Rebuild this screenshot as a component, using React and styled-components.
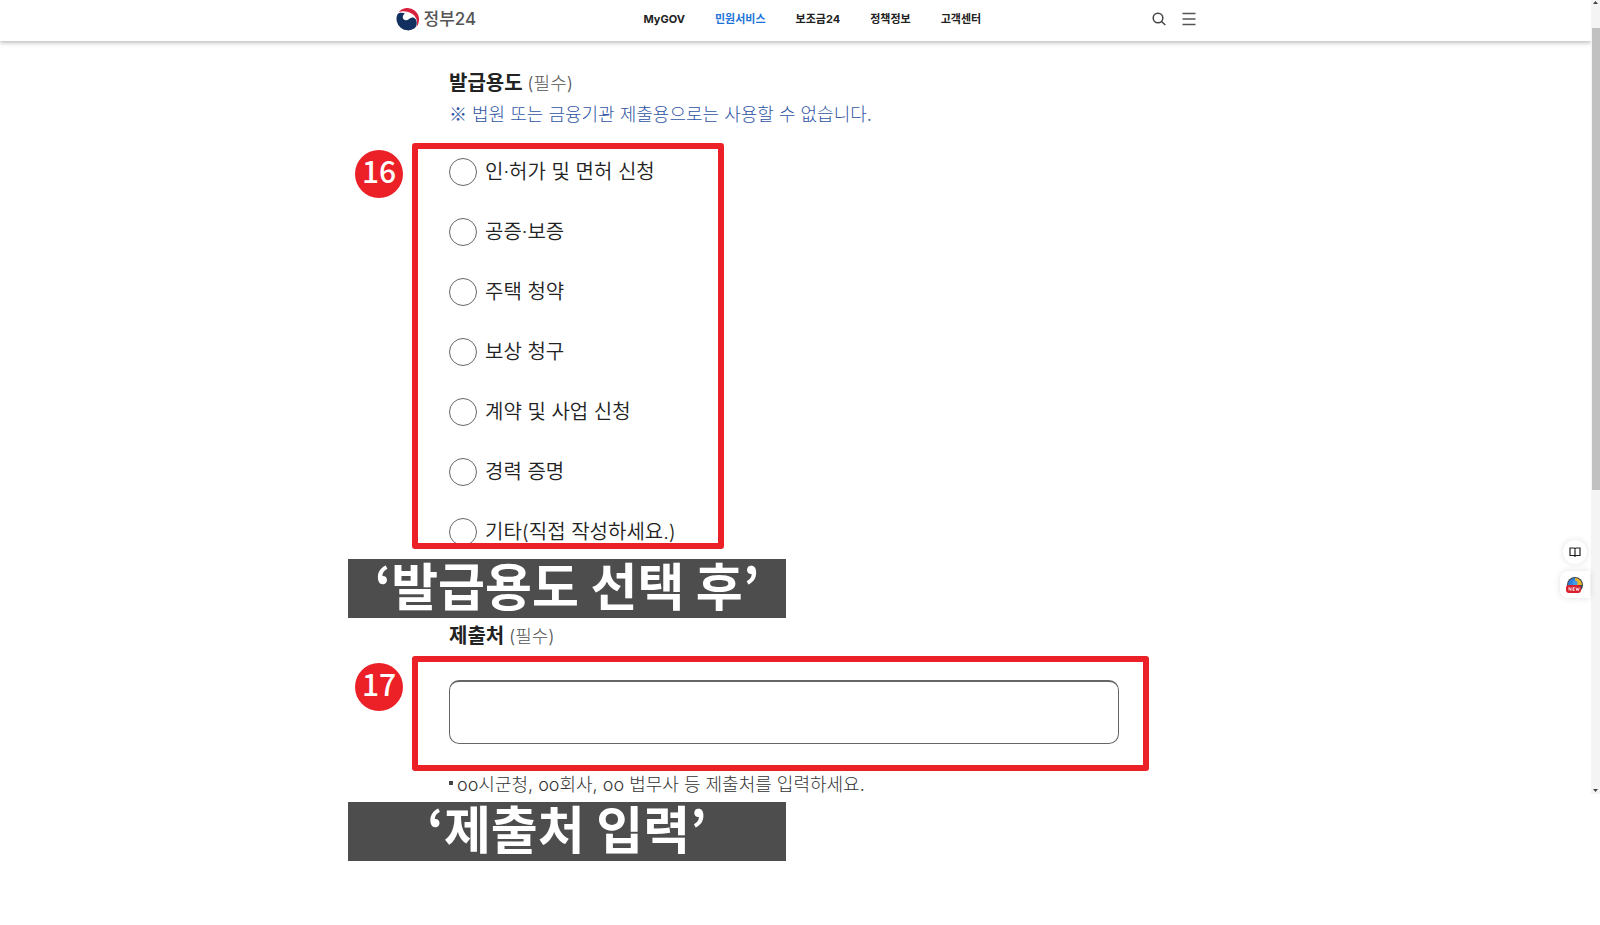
import styled, { createGlobalStyle } from "styled-components";
import { useState } from "react";

const PURPOSES = [
    "인·허가 및 면허 신청",
    "공증·보증",
    "주택 청약",
    "보상 청구",
    "계약 및 사업 신청",
    "경력 증명",
    "기타(직접 작성하세요.)",
];

const MENU = ["MyGOV", "민원서비스", "보조금24", "정책정보", "고객센터"];

const Logo = () => (
    <svg width="24" height="24" viewBox="0 0 24 24" aria-hidden="true">
        <path d="M2.600 5.200A11.500 11.500 0 0 1 20.400 20C22.600 14 19.500 8.600 15.600 6.600 11.500 4.400 6.500 3.600 2.600 5.200z" fill="#d8213f" />
        <path d="M1.500 7.200A11.500 11.500 0 0 0 18.600 21.300C21.600 18.400 21.600 12.600 18 10.800 14.200 9 12.800 13.600 9.400 13.200 5.800 12.600 6.200 8.200 9 6.600 6.400 5.400 3.400 5.600 1.500 7.200z" fill="#12305f" />
    </svg>
);

const App = () => {
    const [purpose, setPurpose] = useState("");
    const [place, setPlace] = useState("");

    return(
        <>
        <GlobalStyle />
        <Layout>
            <Page>
                <Header>
                    <HeaderInner>
                        <Brand href="#"><Logo />정부24</Brand>
                        <Nav>
                            {MENU.map((item) => (
                                <MenuLink key={item} href="#" $active={item === "민원서비스"}>{item}</MenuLink>
                            ))}
                        </Nav>
                        <Tools>
                            <IconButton aria-label="검색">
                                <svg width="14" height="14" viewBox="0 0 14 14" fill="none" stroke="#444" strokeWidth="1.500">
                                    <circle cx="6" cy="6" r="4.800" />
                                    <path d="M9.500 9.500L13.300 13" />
                                </svg>
                            </IconButton>
                            <IconButton aria-label="전체메뉴">
                                <svg width="14" height="14" viewBox="0 0 14 14" stroke="#555" strokeWidth="1.300">
                                    <path d="M.5 1.500h13M.5 7h13M.5 12.500h13" />
                                </svg>
                            </IconButton>
                        </Tools>
                    </HeaderInner>
                </Header>

                <Main>
                    <Heading>발급용도 <Required>(필수)</Required></Heading>
                    <Notice><Mark>※</Mark> 법원 또는 금융기관 제출용으로는 사용할 수 없습니다.</Notice>
                    <Step>
                        <Badge>16</Badge>
                        <ChoiceFrame>
                            <ChoiceList>
                                {PURPOSES.map((item) => (
                                    <Choice key={item}>
                                        <Radio
                                            type="radio"
                                            name="purpose"
                                            checked={purpose === item}
                                            onChange={() => setPurpose(item)}
                                        />
                                        {item}
                                    </Choice>
                                ))}
                            </ChoiceList>
                        </ChoiceFrame>
                    </Step>
                    <Caption>‘발급용도 선택 후’</Caption>

                    <Heading as="label" htmlFor="place">제출처 <Required>(필수)</Required></Heading>
                    <Step>
                        <Badge>17</Badge>
                        <InputFrame>
                            <TextInput id="place" value={place} onChange={(e) => setPlace(e.target.value)} />
                        </InputFrame>
                    </Step>
                    <Help>oo시군청, oo회사, oo 법무사 등 제출처를 입력하세요.</Help>
                    <Caption>‘제출처 입력’</Caption>
                </Main>
            </Page>

            <Scrollbar aria-hidden="true">
                <Arrow viewBox="0 0 5 3"><path d="M0 3L2.500 0 5 3z" /></Arrow>
                <Thumb />
                <Arrow viewBox="0 0 5 3"><path d="M0 0h5L2.500 3z" /></Arrow>
            </Scrollbar>

            <Floating>
                <RoundButton aria-label="읽기 도구">
                    <svg width="12" height="12" viewBox="0 0 12 12" fill="none" stroke="#222" strokeWidth="1.200">
                        <path d="M1 2h4l1 .7L7 2h4v7.500H7l-1 .8-1-.8H1zM6 2.700v7.600" />
                    </svg>
                </RoundButton>
                <TabButton aria-label="새 소식">
                    <svg width="18" height="18" viewBox="0 0 18 18">
                        <circle cx="9" cy="9" r="8" fill="#3c4652" />
                        <path d="M9 9V2A7 7 0 0 0 2 9z" fill="#2d7fe0" />
                        <path d="M9 9V2a7 7 0 0 1 7 7z" fill="#e8b52c" />
                        <path d="M2 9h7v6H4z" fill="#2d7fe0" />
                        <circle cx="9" cy="7" r="2.500" fill="#3f9be8" />
                        <rect x="0" y="9" width="15" height="8" rx="3" fill="#d8202f" />
                        <path d="M3 14.500v-3l2 3v-3M8.500 11.500H7v3h1.500M7 13h1.500M10 11.500l.8 3 .8-2 .8 2 .8-3" fill="none" stroke="#fff" strokeWidth=".8" />
                    </svg>
                </TabButton>
            </Floating>
        </Layout>
        </>
    )
};

const GlobalStyle = createGlobalStyle`
* {
box-sizing: border-box;
}

body {
margin: 0;
background: #fff;
color: #222;
font-family: Inter, "Noto Sans CJK KR", sans-serif;
}
`
const Layout = styled.div`
display: grid;
grid-template-columns: minmax(0, 1fr) 9px;
position: relative;
`
const Page = styled.div`
min-width: 0;
`
const Header = styled.header`
height: 41px;
background: #fff;
box-shadow: 0 2px 4px rgba(0, 0, 0, 0.25);
`
const HeaderInner = styled.div`
display: grid;
grid-template-columns: 248px 1fr auto;
align-items: center;
max-width: 800px;
height: 37px;
margin: 0 auto;
`
const Brand = styled.a`
display: flex;
align-items: center;
gap: 4px;
color: #555;
font-size: 17px;
font-weight: 500;
line-height: 24px;
text-decoration: none;
`
const Nav = styled.nav`
display: flex;
gap: 30px;
`
const MenuLink = styled.a`
color: ${(props) => (props.$active ? "#1a73d9" : "#222")};
font-size: 11px;
font-weight: bold;
line-height: 16px;
text-decoration: none;
`
const Tools = styled.div`
display: flex;
gap: 16px;
`
const IconButton = styled.button`
display: flex;
padding: 0;
border: none;
background: none;
cursor: pointer;
`
const Main = styled.main`
padding: 26px 442px 64px 348px;
`
const Heading = styled.h2`
display: block;
height: 32px;
margin: 0;
padding-left: 101px;
font-size: 20px;
font-weight: bold;
line-height: 32px;
`
const Required = styled.span`
color: #555;
font-size: 18px;
font-weight: 300;
line-height: 20px;
`
const Notice = styled.p`
height: 32px;
margin: 0 0 8px;
padding-left: 101px;
color: #2f55a4;
font-size: 18px;
font-weight: 300;
line-height: 32px;
`
const Mark = styled.span`
font-family: "Noto Sans CJK KR", sans-serif;
line-height: 20px;
`
const Step = styled.div`
display: flex;
align-items: flex-start;
gap: 9px;
padding: 4px 0 0 7px;
`
const Badge = styled.span`
flex: none;
width: 48px;
height: 48px;
margin-top: 7px;
border-radius: 50%;
background: #ec2027;
color: #fff;
font-family: "Noto Sans CJK KR", sans-serif;
font-size: 30px;
font-weight: 500;
line-height: 41px;
text-align: center;
`
// the red border is painted over whatever the frame holds
const Frame = styled.div`
position: relative;

&::after {
content: "";
position: absolute;
inset: 0;
border: 6px solid #ec2027;
border-radius: 3px;
pointer-events: none;
}
`
const ChoiceFrame = styled(Frame)`
width: 312px;
height: 406px;
padding: 15px 0 0 37px;
`
const InputFrame = styled(Frame)`
flex: 1;
padding: 24px 30px 27px 37px;
`
const ChoiceList = styled.div`
display: flex;
flex-direction: column;
gap: 32px;
`
const Choice = styled.label`
display: flex;
align-items: center;
gap: 8px;
font-size: 20px;
font-weight: 350;
line-height: 28px;
`
const Radio = styled.input`
appearance: none;
width: 28px;
height: 28px;
margin: 0;
border: 1px solid #666;
border-radius: 50%;
background: #fff;

&:checked {
border: 8px solid #1a73d9;
}
`
const TextInput = styled.input`
display: block;
width: 100%;
height: 64px;
padding: 0 16px;
border: 1px solid #666;
border-top-width: 2px;
border-radius: 10px;
font-family: inherit;
font-size: 20px;
`
const Caption = styled.p`
width: 438px;
margin: 10px 0 2px;
padding-bottom: 8px;
background: #4d4d4d;
color: #fff;
font-family: "Noto Sans CJK KR", sans-serif;
font-size: 51px;
font-weight: bold;
line-height: 51px;
text-align: center;

&:last-child {
margin: 3px 0 0;
}
`
const Help = styled.p`
margin: 0;
padding-left: 101px;
color: #333;
font-size: 18px;
font-weight: 300;
line-height: 28px;

&::before {
content: "";
display: inline-block;
width: 4px;
height: 4px;
margin-right: 4px;
vertical-align: 6px;
background: #444;
}
`
const Scrollbar = styled.div`
display: flex;
flex-direction: column;
align-items: center;
justify-content: space-between;
height: 794px;
padding: 1px 0 2px;
background: #f4f4f4;
`
const Thumb = styled.div`
width: 8px;
height: 462px;
margin: 24px 0 auto;
background: #c1c1c1;
`
const Arrow = styled.svg`
width: 5px;
height: 3px;
fill: #444;
`
const Floating = styled.div`
position: absolute;
top: 540px;
right: 10px;
display: flex;
flex-direction: column;
align-items: flex-end;
gap: 7px;
`
const RoundButton = styled.button`
display: flex;
align-items: center;
justify-content: center;
width: 24px;
height: 24px;
margin-right: 3px;
padding: 0;
border: none;
border-radius: 50%;
background: #fff;
box-shadow: 0 0 6px rgba(0, 0, 0, 0.12);
`
const TabButton = styled(RoundButton)`
width: 30px;
height: 27px;
margin: 0;
border-radius: 8px 0 0 8px;
`

export default App;
